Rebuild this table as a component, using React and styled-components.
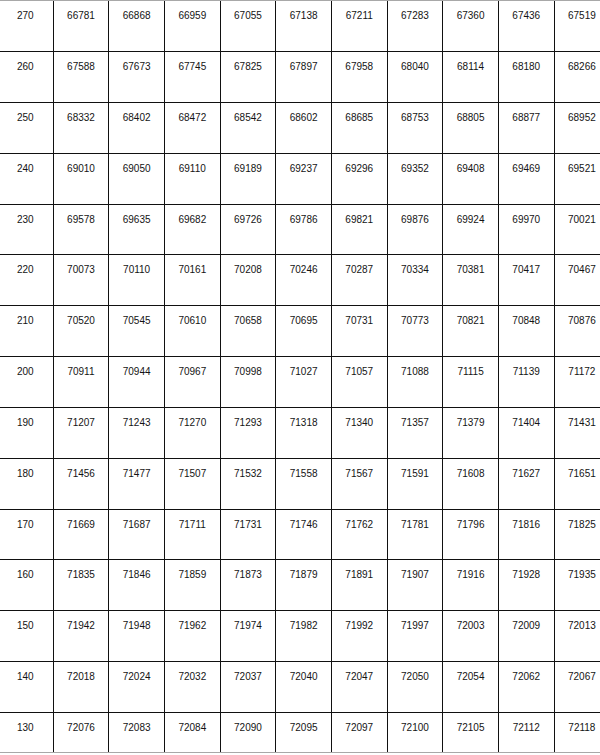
import styled, { createGlobalStyle } from "styled-components";

const GlobalStyle = createGlobalStyle`
  html, body {
    margin: 0;
    padding: 0;
    background: #fff;
  }
`;

const rows = [
  ["270", "66781", "66868", "66959", "67055", "67138", "67211", "67283", "67360", "67436", "67519"],
  ["260", "67588", "67673", "67745", "67825", "67897", "67958", "68040", "68114", "68180", "68266"],
  ["250", "68332", "68402", "68472", "68542", "68602", "68685", "68753", "68805", "68877", "68952"],
  ["240", "69010", "69050", "69110", "69189", "69237", "69296", "69352", "69408", "69469", "69521"],
  ["230", "69578", "69635", "69682", "69726", "69786", "69821", "69876", "69924", "69970", "70021"],
  ["220", "70073", "70110", "70161", "70208", "70246", "70287", "70334", "70381", "70417", "70467"],
  ["210", "70520", "70545", "70610", "70658", "70695", "70731", "70773", "70821", "70848", "70876"],
  ["200", "70911", "70944", "70967", "70998", "71027", "71057", "71088", "71115", "71139", "71172"],
  ["190", "71207", "71243", "71270", "71293", "71318", "71340", "71357", "71379", "71404", "71431"],
  ["180", "71456", "71477", "71507", "71532", "71558", "71567", "71591", "71608", "71627", "71651"],
  ["170", "71669", "71687", "71711", "71731", "71746", "71762", "71781", "71796", "71816", "71825"],
  ["160", "71835", "71846", "71859", "71873", "71879", "71891", "71907", "71916", "71928", "71935"],
  ["150", "71942", "71948", "71962", "71974", "71982", "71992", "71997", "72003", "72009", "72013"],
  ["140", "72018", "72024", "72032", "72037", "72040", "72047", "72050", "72054", "72062", "72067"],
  ["130", "72076", "72083", "72084", "72090", "72095", "72097", "72100", "72105", "72112", "72118"],
];

const Page = styled.div`
  width: 600px;
  height: 755px;
  overflow: hidden;
  background: #fff;
`;

const Frame = styled.div`
  height: 751px;
  overflow: hidden;
  border-top: 1px solid #a8a8a8;
  border-bottom: 1px solid #a8a8a8;
`;

const Grid = styled.div`
  display: grid;
  grid-template-columns: repeat(11, 54.67px);
  grid-template-rows: 50px repeat(14, 49.85px);
  gap: 1px;
  margin-left: -2px;
  width: max-content;
  background: #111;
  padding-bottom: 1px;
`;

const Cell = styled.div`
  background: #fff;
  text-align: center;
  padding-top: 9px;
  font-family: "Liberation Sans", Arial, sans-serif;
  font-size: 10px;
  line-height: 1.15;
  color: #141414;
`;

export default function App() {
  return (
    <>
      <GlobalStyle />
      <Page>
        <Frame>
          <Grid>
            {rows.map((row) =>
              row.map((value, i) => <Cell key={row[0] + "-" + i}>{value}</Cell>)
            )}
          </Grid>
        </Frame>
      </Page>
    </>
  );
}
